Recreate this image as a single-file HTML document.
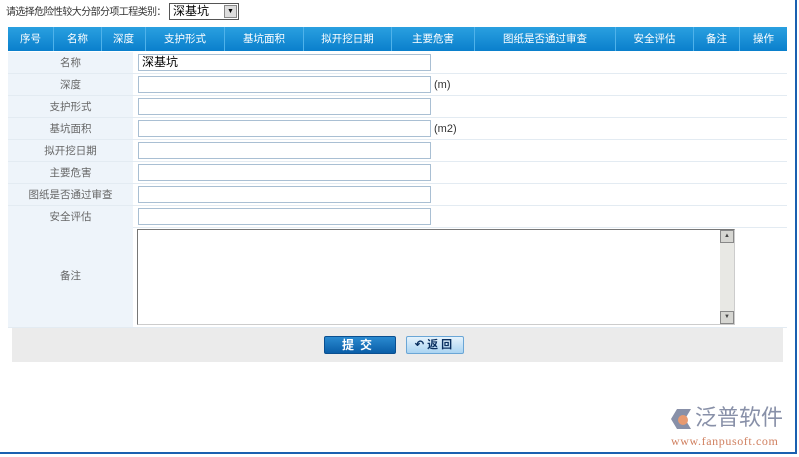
<!DOCTYPE html>
<html><head><meta charset="utf-8"><style>
*{margin:0;padding:0;box-sizing:border-box}
body{width:799px;height:457px;background:#fff;position:relative;overflow:hidden;font-family:"Liberation Sans","Noto Sans CJK SC",sans-serif;font-size:11px;color:#444}
.abs{position:absolute}
.hdr{position:absolute;left:8px;top:27px;width:779px;height:24px;background:linear-gradient(#2aa0e0,#0a7fcc);display:flex}
.hdr div{color:#fff;text-align:center;line-height:24px;border-right:1px solid #4fb2ea;font-size:10.5px}
.row{position:absolute;left:8px;width:779px;height:22px;border-bottom:1px solid #e3ebf2}
.lab{position:absolute;left:0;top:0;width:125px;height:100%;background:#eef4fa;text-align:center;line-height:22px;color:#666;font-size:10.5px}
.inp{position:absolute;left:130px;top:2px;width:293px;height:17px;border:1px solid #a9bfd3;background:#fff;font-size:12px;color:#000;padding-left:3px;line-height:15px}
.unit{position:absolute;left:426px;top:0;line-height:22px;color:#333}
</style></head><body>
<div class="abs" style="left:6px;top:6px;font-size:10px;letter-spacing:-0.6px;color:#333;line-height:14px;white-space:nowrap">请选择危险性较大分部分项工程类别：</div>
<div class="abs" style="left:169px;top:3px;width:70px;height:17px;border:1px solid #555;background:#fff;font-size:12px;color:#000;padding-left:3px;line-height:15px">深基坑
<div class="abs" style="right:1px;top:1px;width:13px;height:13px;background:#ddd;border:1px solid #888;font-size:7px;text-align:center;line-height:12px">▼</div></div>
<div class="hdr">
<div style="width:46px">序号</div><div style="width:48px">名称</div><div style="width:44px">深度</div><div style="width:79px">支护形式</div><div style="width:79px">基坑面积</div><div style="width:88px">拟开挖日期</div><div style="width:83px">主要危害</div><div style="width:141px">图纸是否通过审查</div><div style="width:78px">安全评估</div><div style="width:46px">备注</div><div style="width:47px;border:none">操作</div>
</div>
<div class="row" style="top:52px"><div class="lab">名称</div><div class="inp">深基坑</div></div>
<div class="row" style="top:74px"><div class="lab">深度</div><div class="inp"></div><div class="unit">(m)</div></div>
<div class="row" style="top:96px"><div class="lab">支护形式</div><div class="inp"></div></div>
<div class="row" style="top:118px"><div class="lab">基坑面积</div><div class="inp"></div><div class="unit">(m2)</div></div>
<div class="row" style="top:140px"><div class="lab">拟开挖日期</div><div class="inp"></div></div>
<div class="row" style="top:162px"><div class="lab">主要危害</div><div class="inp"></div></div>
<div class="row" style="top:184px"><div class="lab">图纸是否通过审查</div><div class="inp"></div></div>
<div class="row" style="top:206px"><div class="lab">安全评估</div><div class="inp"></div></div>
<div class="row" style="top:227px;height:101px"><div class="lab" style="line-height:98px">备注</div>
<div class="abs" style="left:129px;top:2px;width:598px;height:96px;border:1px solid #777;border-right-color:#ccc;border-bottom-color:#ccc;background:#fff">
<div class="abs" style="right:0;top:0;width:14px;height:94px;background:#e8e8e4"></div>
<div class="abs" style="right:0;top:0;width:14px;height:13px;background:#d6d6d2;border:1px solid #888;font-size:6px;text-align:center;line-height:11px">▲</div>
<div class="abs" style="right:0;bottom:0;width:14px;height:13px;background:#d6d6d2;border:1px solid #888;font-size:6px;text-align:center;line-height:11px">▼</div></div></div>
<div class="abs" style="left:12px;top:328px;width:771px;height:34px;background:#ebebeb"></div>
<div class="abs" style="left:324px;top:336px;width:72px;height:18px;background:linear-gradient(#2a8ad0,#0a5ea8);border:1px solid #0a4f90;border-radius:2px;color:#fff;font-weight:bold;text-align:center;line-height:16px;font-size:12px;letter-spacing:6px">提交</div>
<div class="abs" style="left:406px;top:336px;width:58px;height:18px;background:linear-gradient(#e6f3fc,#aad4f2);border:1px solid #6aa6d6;border-radius:2px;color:#0a3060;font-weight:bold;text-align:center;line-height:16px;font-size:11px;letter-spacing:3px">↶返回</div>
<div class="abs" style="left:795px;top:0;width:2px;height:454px;background:#1a60b0"></div>
<div class="abs" style="left:0;top:452px;width:797px;height:2px;background:#1a60b0"></div>
<div class="abs" style="left:671px;top:409px;width:20px;height:20px;background:#8890a8;clip-path:polygon(30% 0,100% 0,70% 50%,100% 100%,30% 100%,0 50%)"></div>
<div class="abs" style="left:678px;top:415px;width:10px;height:10px;border-radius:50%;background:#e89a70"></div>
<div class="abs" style="left:695px;top:405px;font-size:22px;color:#8890a8;line-height:26px;letter-spacing:0px;white-space:nowrap">泛普软件</div>
<div class="abs" style="left:671px;top:435px;font-family:'Liberation Serif',serif;font-size:12px;letter-spacing:0.6px;color:#d08060;line-height:12px;white-space:nowrap">www.fanpusoft.com</div>
</body></html>
